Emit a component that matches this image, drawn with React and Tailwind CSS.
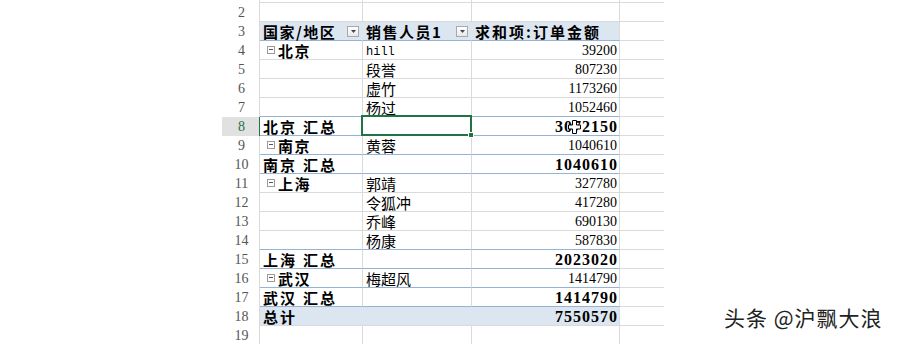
import React from 'react';

const rows = [
  { n: 2 },
  { n: 3, header: true, blueBottom: true },
  { n: 4, region: '北京', name: 'hill', amt: '39200' },
  { n: 5, name: '段誉', amt: '807230' },
  { n: 6, name: '虚竹', amt: '1173260' },
  { n: 7, name: '杨过', amt: '1052460', blueBottom: true },
  { n: 8, total: '北京', amt: '3072150', blueBottom: true, selected: true },
  { n: 9, region: '南京', name: '黄蓉', amt: '1040610', blueBottom: true },
  { n: 10, total: '南京', amt: '1040610', blueBottom: true },
  { n: 11, region: '上海', name: '郭靖', amt: '327780' },
  { n: 12, name: '令狐冲', amt: '417280' },
  { n: 13, name: '乔峰', amt: '690130' },
  { n: 14, name: '杨康', amt: '587830', blueBottom: true },
  { n: 15, total: '上海', amt: '2023020', blueBottom: true },
  { n: 16, region: '武汉', name: '梅超风', amt: '1414790', blueBottom: true },
  { n: 17, total: '武汉', amt: '1414790', blueBottom: true },
  { n: 18, grand: true, amt: '7550570' },
  { n: 19 },
];

const cjk = "font-['Noto_Sans_CJK_SC',sans-serif]";
const num = "font-['Liberation_Serif',serif]";

function DropButton() {
  return (
    <span className="flex h-[11px] w-[12px] items-center justify-center border border-[#a9a9a9] bg-gradient-to-b from-white to-[#e9e9e9]">
      <svg width="5" height="3" viewBox="0 0 5 3">
        <path d="M0 0h5L2.5 3z" fill="#444" />
      </svg>
    </span>
  );
}

function Collapse() {
  return (
    <span className="relative mr-[3px] inline-block h-[8px] w-[8px] border border-[#9b9b9b] bg-white">
      <span className="absolute left-[1px] top-[2px] h-px w-[4px] bg-[#555]" />
    </span>
  );
}

function FatCross() {
  return (
    <svg className="absolute left-[96px] top-[3px]" width="13" height="14" viewBox="0 0 13 14">
      <path
        d="M4.5 0.5h4v4.5h4v4h-4v4.5h-4v-4.5h-4v-4h4z"
        fill="#fff"
        stroke="#000"
        strokeWidth="1"
      />
    </svg>
  );
}

export default function App() {
  return (
    <div className="relative h-[344px] w-[900px] overflow-hidden bg-white">
      <div className="pl-[222px]">
        {/* bottom edge of row 1 */}
        <div className="flex h-[3px]">
          <div className="w-[38px] border-r border-[#dadada]" />
          <div className="w-[103px] border-b border-r border-[#dadada]" />
          <div className="w-[109px] border-b border-r border-[#dadada]" />
          <div className="w-[148px] border-b border-r border-[#dadada]" />
          <div className="w-[44px] border-b border-[#dadada]" />
        </div>

        {rows.map((r) => {
          const fill = r.header || r.grand;
          const bottom = r.blueBottom ? 'border-b-[#95b3d7]' : 'border-b-[#dadada]';
          const right = fill ? 'border-r-[#dce6f1]' : 'border-r-[#dadada]';
          const bg = fill ? 'bg-[#dce6f1]' : 'bg-white';
          return (
            <div key={r.n} className="flex h-[19px]">
              <div
                className={`flex w-[38px] items-center justify-center border-r text-[14px] leading-none ${num} ${
                  r.selected
                    ? 'border-r-[#217346] bg-[#e1e1e1] text-[#217346]'
                    : 'border-r-[#dadada] text-[#555]'
                }`}
              >
                <span className="pl-[2px] pt-[1px]">{r.n}</span>
              </div>

              {/* column B */}
              <div
                className={`flex w-[103px] items-center border-b border-r pl-[3px] pr-[3px] text-[15px] leading-none text-black ${cjk} ${bottom} ${right} ${bg}`}
              >
                {r.header && (
                  <>
                    <span className="flex-1 font-bold tracking-[1.5px]">国家/地区</span>
                    <DropButton />
                  </>
                )}
                {r.region && (
                  <span className="flex items-center pl-[4px] font-bold tracking-[1.5px]">
                    <Collapse />
                    {r.region}
                  </span>
                )}
                {r.total && (
                  <span className="font-bold tracking-[2px]">
                    {r.total}
                    <span className="ml-[6px]">汇总</span>
                  </span>
                )}
                {r.grand && <span className="font-bold tracking-[2px]">总计</span>}
              </div>

              {/* column C */}
              <div
                className={`relative flex w-[109px] items-center border-b border-r pl-[3px] pr-[3px] text-[15px] leading-none text-black ${cjk} ${bottom} ${right} ${bg}`}
              >
                {r.header && (
                  <>
                    <span className="flex-1 font-bold tracking-[1.5px]">销售人员1</span>
                    <DropButton />
                  </>
                )}
                {r.name === 'hill' ? (
                  <span className="pt-[4px] font-['Liberation_Mono',monospace] text-[12px]">hill</span>
                ) : (
                  r.name && <span>{r.name}</span>
                )}
                {r.selected && (
                  <div className="absolute -bottom-[1px] -left-[2px] -right-[1px] -top-[2px] z-10 border-2 border-[#217346]">
                    <span className="absolute -bottom-[4px] -right-[4px] h-[6px] w-[6px] border border-white bg-[#217346]" />
                  </div>
                )}
              </div>

              {/* column D */}
              <div
                className={`relative flex w-[148px] items-center border-b border-r border-r-[#dadada] pl-[3px] pr-[2px] leading-none text-black ${bottom} ${bg}`}
              >
                {r.header && (
                  <span className={`font-bold tracking-[2px] text-[15px] ${cjk}`}>求和项:订单金额</span>
                )}
                {r.amt && (
                  <span
                    className={`ml-auto pt-[1px] ${num} ${
                      r.total || r.grand
                        ? 'text-[16px] font-bold tracking-[1px] -mr-[1px]'
                        : 'text-[14px]'
                    }`}
                  >
                    {r.amt}
                  </span>
                )}
                {r.selected && <FatCross />}
              </div>

              {/* column E */}
              <div className="w-[44px] border-b border-[#dadada]" />
            </div>
          );
        })}
      </div>

      <div
        className={`absolute left-[724px] top-[302px] text-[21px] tracking-[1px] text-[#222] ${cjk} [text-shadow:0_0_2px_#fff,1px_1px_0_#fff]`}
      >
        头条 @沪飘大浪
      </div>
    </div>
  );
}
